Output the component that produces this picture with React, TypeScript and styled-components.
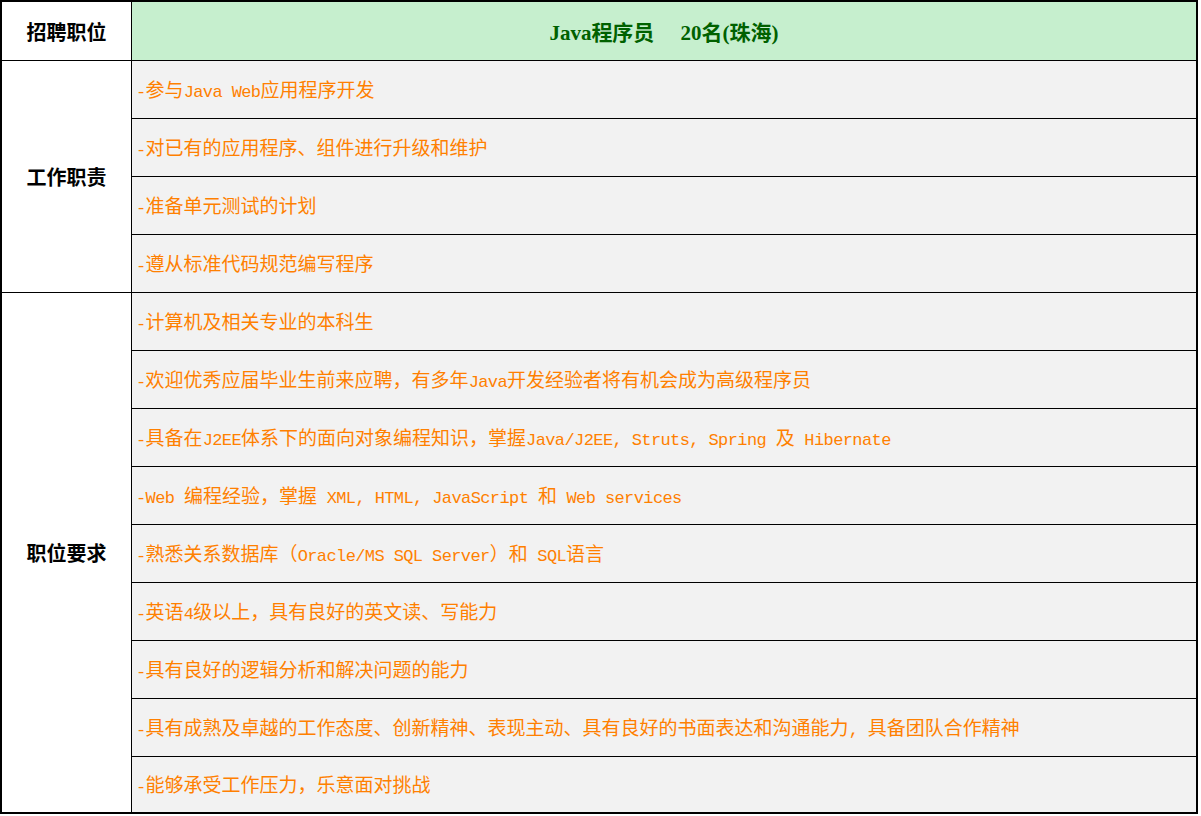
import React from "react";
import styled, { createGlobalStyle } from "styled-components";

const GlobalStyle = createGlobalStyle`
  html, body {
    margin: 0;
    padding: 0;
    background: #ffffff;
  }
`;

const Sheet = styled.div`
  display: grid;
  grid-template-columns: 129px 1fr;
  grid-template-rows: 58px repeat(12, 57px) 55px;
  gap: 1px;
  width: 1198px;
  box-sizing: border-box;
  border: 2px solid #000000;
  background: #000000;
`;

const LabelCell = styled.div<{ $span?: number }>`
  grid-row: span ${(p) => p.$span ?? 1};
  display: flex;
  align-items: center;
  justify-content: center;
  background: #ffffff;
  color: #000000;
  font-family: "Noto Sans CJK SC", sans-serif;
  font-size: 20px;
  font-weight: 700;
`;

const TitleCell = styled.div`
  display: flex;
  align-items: center;
  justify-content: center;
  background: #c6efce;
  color: #006100;
  font-family: "Liberation Serif", "Noto Sans CJK SC", serif;
  font-size: 21px;
  font-weight: 700;
  white-space: pre;
`;

const ItemCell = styled.div`
  display: flex;
  align-items: center;
  padding: 2px 0 0 4px;
  background: #f2f2f2;
  color: #ff8000;
  font-family: "Noto Sans CJK SC", sans-serif;
  font-size: 19px;
  white-space: pre;
`;

const ItemText = styled.span`
  line-height: 1.2;
`;

const Latin = styled.span`
  font-family: "Liberation Mono", monospace;
  font-size: 17px;
  letter-spacing: -0.6px;
`;

const duties = [
  "-参与Java Web应用程序开发",
  "-对已有的应用程序、组件进行升级和维护",
  "-准备单元测试的计划",
  "-遵从标准代码规范编写程序",
];

const requirements = [
  "-计算机及相关专业的本科生",
  "-欢迎优秀应届毕业生前来应聘，有多年Java开发经验者将有机会成为高级程序员",
  "-具备在J2EE体系下的面向对象编程知识，掌握Java/J2EE, Struts, Spring 及 Hibernate",
  "-Web 编程经验，掌握 XML, HTML, JavaScript 和 Web services",
  "-熟悉关系数据库（Oracle/MS SQL Server）和 SQL语言",
  "-英语4级以上，具有良好的英文读、写能力",
  "-具有良好的逻辑分析和解决问题的能力",
  "-具有成熟及卓越的工作态度、创新精神、表现主动、具有良好的书面表达和沟通能力, 具备团队合作精神",
  "-能够承受工作压力，乐意面对挑战",
];

// half-width runs get their own span so they take half a CJK cell
function mixed(text: string) {
  return text.split(/([\x20-\x7e]+)/).map((part, i) =>
    /^[\x20-\x7e]+$/.test(part) ? <Latin key={i}>{part}</Latin> : part
  );
}

export default function App() {
  return (
    <>
      <GlobalStyle />
      <Sheet>
        <LabelCell>招聘职位</LabelCell>
        <TitleCell>Java程序员     20名(珠海)</TitleCell>

        <LabelCell $span={duties.length}>工作职责</LabelCell>
        {duties.map((d) => (
          <ItemCell key={d}>
            <ItemText>{mixed(d)}</ItemText>
          </ItemCell>
        ))}

        <LabelCell $span={requirements.length}>职位要求</LabelCell>
        {requirements.map((r) => (
          <ItemCell key={r}>
            <ItemText>{mixed(r)}</ItemText>
          </ItemCell>
        ))}
      </Sheet>
    </>
  );
}
